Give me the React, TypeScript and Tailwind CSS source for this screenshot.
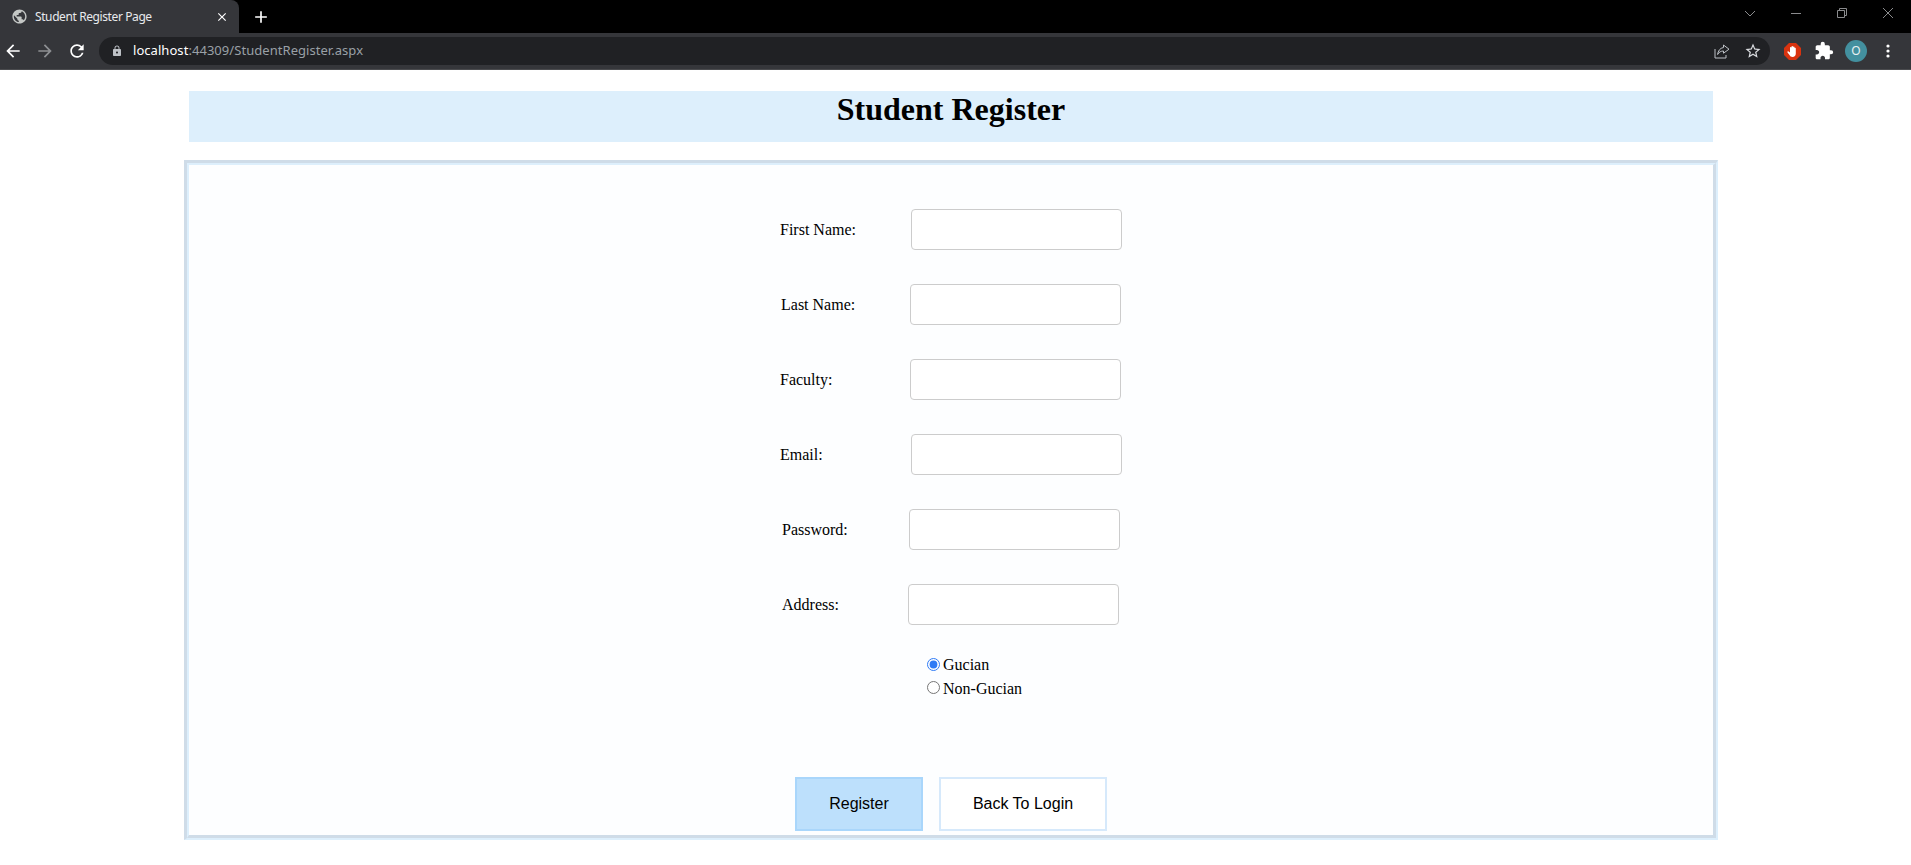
import {
  MdAdd,
  MdArrowBack,
  MdArrowForward,
  MdClose,
  MdExtension,
  MdLock,
  MdPublic,
  MdRefresh,
  MdStarBorder,
} from "react-icons/md";

const FIELDS = [
  { label: "First Name:", pad: "pl-[591px]", width: "w-[131px]" },
  { label: "Last Name:", pad: "pl-[592px]", width: "w-[129px]" },
  { label: "Faculty:", pad: "pl-[591px]", width: "w-[130px]" },
  { label: "Email:", pad: "pl-[591px]", width: "w-[131px]" },
  { label: "Password:", pad: "pl-[593px]", width: "w-[127px]" },
  { label: "Address:", pad: "pl-[593px]", width: "w-[126px]" },
];

function BrowserChrome() {
  return (
    <div className="h-[70px] shrink-0 font-['Noto_Sans',sans-serif]">
      <div className="flex h-[33px] bg-black">
        <div className="flex w-[239px] items-center rounded-tr-lg bg-[#35363a] pl-[11px] pr-[10px] text-white">
          <MdPublic className="h-[17px] w-[17px] shrink-0 text-[#c4c7c5]" />
          <span className="ml-[7px] text-[12px] tracking-[-0.4px] text-[#e8eaed]">Student Register Page</span>
          <MdClose className="ml-auto h-[14px] w-[14px] text-white" />
        </div>
        <MdAdd className="ml-[12px] mt-[7px] h-[20px] w-[20px] text-white" />
        <div className="ml-auto flex h-[26px] text-[#8a8b8d]">
          <div className="grid w-[46px] place-items-center">
            <svg width="12" height="7" viewBox="0 0 12 7" fill="none" stroke="currentColor">
              <path d="M1 1l5 5 5-5" />
            </svg>
          </div>
          <div className="grid w-[46px] place-items-center">
            <svg width="10" height="1" viewBox="0 0 10 1" fill="currentColor">
              <path d="M0 0h10v1H0z" />
            </svg>
          </div>
          <div className="grid w-[46px] place-items-center">
            <svg width="10" height="10" viewBox="0 0 10 10" fill="none" stroke="currentColor">
              <path d="M.5 2.5h7v7h-7zM2.5 2.5v-2h7v7h-2" />
            </svg>
          </div>
          <div className="grid w-[46px] place-items-center">
            <svg width="10" height="10" viewBox="0 0 10 10" fill="none" stroke="currentColor">
              <path d="M0 0l10 10M10 0L0 10" />
            </svg>
          </div>
        </div>
      </div>
      <div className="flex h-[37px] items-center border-b border-[#4a4b4e] bg-[#35363a]">
        <MdArrowBack className="ml-[3px] h-[20px] w-[20px] text-white" />
        <MdArrowForward className="ml-[12px] h-[20px] w-[20px] text-[#8e9093]" />
        <MdRefresh className="ml-[12px] h-[20px] w-[20px] text-white" />
        <div className="ml-[12px] flex h-[28px] w-[1671px] items-center rounded-full bg-[#202124] pl-[12px]">
          <MdLock className="h-[12px] w-[12px] text-[#bdc1c6]" />
          <span className="ml-[10px] text-[13px] tracking-[0.05px] text-white">
            localhost<span className="text-[#9aa0a6]">:44309/StudentRegister.aspx</span>
          </span>
          <svg className="ml-auto" width="16" height="15" viewBox="0 0 16 15" fill="none" stroke="#bdc1c6" strokeWidth="1">
            <path d="M1 5v9h11v-3" />
            <path d="M9.500 1l5.500 4.200-5.500 4V7C7 7 5 8 3.600 10.500 4 7 6 4 9.500 3.500z" />
          </svg>
          <MdStarBorder className="ml-[14px] mr-[8px] h-[18px] w-[18px] text-[#dadce0]" />
        </div>
        <svg className="ml-[14px]" width="17" height="17" viewBox="0 0 17 17">
          <path d="M5 0h7l5 5v7l-5 5H5l-5-5V5z" fill="#d9330f" />
          <path
            d="M4.500 8.500l1.500 1V4.500a.8.8 0 011.500 0V3.500a.8.8 0 011.500 0v.5a.8.8 0 011.500 0v1a.8.8 0 011.300.5v5c0 2-1.300 3.500-3.300 3.500-1.500 0-2.500-.8-3-2L3.500 9.500c-.3-.8.500-1.400 1-1z"
            fill="#fff"
          />
        </svg>
        <MdExtension className="ml-[13px] h-[20px] w-[20px] text-white" />
        <div className="ml-[11px] grid h-[22px] w-[22px] place-items-center rounded-full bg-[#43909f] text-[12px] text-[#e8f0f2]">
          O
        </div>
        <svg className="ml-[19px]" width="4" height="14" viewBox="0 0 4 14" fill="#fff">
          <circle cx="2" cy="2" r="1.600" />
          <circle cx="2" cy="7" r="1.600" />
          <circle cx="2" cy="12" r="1.600" />
        </svg>
      </div>
    </div>
  );
}

export default function App() {
  return (
    <div className="flex h-[865px] flex-col overflow-hidden bg-white font-['Liberation_Serif',serif] text-black">
      <BrowserChrome />

      <div className="ml-[189px] mt-[21px] h-[51px] w-[1524px] bg-[#ddeffc] text-center">
        <h1 className="text-[32px] font-bold leading-[37px]">Student Register</h1>
      </div>

      <div className="ml-[184px] mt-[18px] h-[680px] w-[1534px] border-t-[3px] border-r-2 border-b-2 border-l-[3px] border-t-[#cfdce8] border-r-[#ddeffc] border-b-[#ddeffc] border-l-[#cfdce8]">
        <div className="h-full border-t-2 border-r-[3px] border-b-[3px] border-l-2 border-t-[#ddeffc] border-r-[#cfdce8] border-b-[#cfdce8] border-l-[#ddeffc] bg-[#fdfeff] pt-[44px]">
          {FIELDS.map((field) => (
            <div key={field.label} className={`mb-[34px] flex h-[41px] items-center ${field.pad}`}>
              <label className={`${field.width} shrink-0 text-[16px] leading-[18px]`}>{field.label}</label>
              <input
                type="text"
                className="h-[41px] w-[211px] rounded-[4px] border border-[#cccccc] bg-white"
              />
            </div>
          ))}

          <div className="-mt-[6px] ml-[738px] flex flex-col text-[16px]">
            <label className="flex h-[24px] items-center">
              <input type="radio" name="kind" defaultChecked className="mb-[2px] mr-[3px] h-[13px] w-[13px] accent-[#2f7bf5]" />
              Gucian
            </label>
            <label className="flex h-[24px] items-center">
              <input type="radio" name="kind" className="mb-[4px] mr-[3px] h-[13px] w-[13px] accent-[#2f7bf5]" />
              Non-Gucian
            </label>
          </div>

          <div className="ml-[606px] mt-[76px] flex gap-[16px] font-['Liberation_Sans',sans-serif] text-[16px]">
            <button type="button" className="h-[54px] w-[128px] border-2 border-[#a9d6fb] bg-[#bde0fc]">
              Register
            </button>
            <button type="button" className="h-[54px] w-[168px] border-2 border-[#d6e9fb] bg-white">
              Back To Login
            </button>
          </div>
        </div>
      </div>
    </div>
  );
}
